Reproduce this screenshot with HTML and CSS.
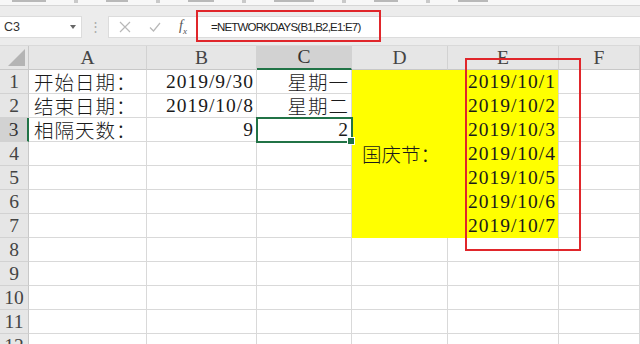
FILE: index.html
```html
<!DOCTYPE html>
<html lang="zh-CN">
<head>
    <meta charset="UTF-8">
    <title>NETWORKDAYS</title>
    <link rel="stylesheet" href="styles.css">
</head>
<body>
<div class="ribbon">
    <i style="width:34px"></i><i class="sep"></i><i style="width:22px"></i><i class="sep"></i><i style="width:26px"></i><i class="sep"></i><i style="width:40px"></i><i class="sep"></i><i style="width:24px"></i><i class="sep"></i><i style="width:30px"></i>
</div>

<div class="fbar">
    <div class="namebox">
        <span>C3</span>
        <i class="drop"></i>
    </div>
    <div class="grip">⋮</div>
    <div class="input">
        <svg class="ico" width="12" height="12" viewBox="0 0 12 12">
            <path d="M1 1L11 11M11 1L1 11" stroke="#b8b8b8" stroke-width="1.2" fill="none"/>
        </svg>
        <svg class="ico" width="12" height="12" viewBox="0 0 12 12">
            <path d="M1 6.5L4.5 10L11 2" stroke="#b8b8b8" stroke-width="1.2" fill="none"/>
        </svg>
        <span class="fx">f<sub>x</sub></span>
        <span class="formula">=NETWORKDAYS(B1,B2,E1:E7)</span>
    </div>
    <div class="mark mark-formula"></div>
</div>

<div class="sheet">
    <div class="grid">
        <div class="corner"><i></i></div>
        <div class="ch">A</div>
        <div class="ch">B</div>
        <div class="ch on">C</div>
        <div class="ch">D</div>
        <div class="ch">E</div>
        <div class="ch">F</div>

        <div class="rh">1</div>
        <div class="cell">开始日期：</div>
        <div class="cell num">2019/9/30</div>
        <div class="cell num">星期一</div>
        <div class="cell merged">国庆节：</div>
        <div class="cell num yellow">2019/10/1</div>
        <div class="cell"></div>

        <div class="rh">2</div>
        <div class="cell">结束日期：</div>
        <div class="cell num">2019/10/8</div>
        <div class="cell num">星期二</div>
        <div class="cell num yellow">2019/10/2</div>
        <div class="cell"></div>

        <div class="rh on">3</div>
        <div class="cell">相隔天数：</div>
        <div class="cell num">9</div>
        <div class="cell num active">2</div>
        <div class="cell num yellow">2019/10/3</div>
        <div class="cell"></div>

        <div class="rh">4</div>
        <div class="cell"></div>
        <div class="cell"></div>
        <div class="cell"></div>
        <div class="cell num yellow">2019/10/4</div>
        <div class="cell"></div>

        <div class="rh">5</div>
        <div class="cell"></div>
        <div class="cell"></div>
        <div class="cell"></div>
        <div class="cell num yellow">2019/10/5</div>
        <div class="cell"></div>

        <div class="rh">6</div>
        <div class="cell"></div>
        <div class="cell"></div>
        <div class="cell"></div>
        <div class="cell num yellow">2019/10/6</div>
        <div class="cell"></div>

        <div class="rh">7</div>
        <div class="cell"></div>
        <div class="cell"></div>
        <div class="cell"></div>
        <div class="cell num yellow">2019/10/7</div>
        <div class="cell"></div>

        <div class="rh">8</div>
        <div class="cell"></div><div class="cell"></div><div class="cell"></div><div class="cell"></div><div class="cell"></div><div class="cell"></div>
        <div class="rh">9</div>
        <div class="cell"></div><div class="cell"></div><div class="cell"></div><div class="cell"></div><div class="cell"></div><div class="cell"></div>
        <div class="rh">10</div>
        <div class="cell"></div><div class="cell"></div><div class="cell"></div><div class="cell"></div><div class="cell"></div><div class="cell"></div>
        <div class="rh">11</div>
        <div class="cell"></div><div class="cell"></div><div class="cell"></div><div class="cell"></div><div class="cell"></div><div class="cell"></div>
        <div class="rh">12</div>
        <div class="cell"></div><div class="cell"></div><div class="cell"></div><div class="cell"></div><div class="cell"></div><div class="cell"></div>
    </div>
    <div class="mark mark-e"></div>
</div>
</body>
</html>
```

FILE: styles.css
```css
* {
    margin: 0;
    padding: 0;
    box-sizing: border-box;
}
html, body {
    width: 640px;
    height: 344px;
    overflow: hidden;
    background: #fff;
}
body {
    font-family: "Liberation Sans", "Noto Sans CJK SC", sans-serif;
}

/* 功能区的最下边一点 */
.ribbon {
    height: 6px;
    background: #f7f7f7;
    border-bottom: 1px solid #d6d6d6;
    display: flex;
    gap: 28px;
    padding-left: 12px;
}
.ribbon i {
    height: 2px;
    background: #b9b9b9;
}
.ribbon i.sep {
    width: 4px;
    height: 3px;
    background: #c9c9c9;
}

/* 编辑栏 */
.fbar {
    height: 40px;
    background: #ececec;
    display: flex;
    align-items: center;
    padding-top: 2px;
    position: relative;
    border-bottom: 1px solid #d9d9d9;
}
.namebox {
    width: 82px;
    height: 22px;
    background: #fff;
    border: 1px solid #dcdcdc;
    border-left: none;
    display: flex;
    align-items: center;
    justify-content: space-between;
    padding: 0 5px 0 4px;
    font-size: 12.5px;
    color: #333;
}
.drop {
    width: 0;
    height: 0;
    border-left: 3px solid transparent;
    border-right: 3px solid transparent;
    border-top: 4px solid #666;
}
.grip {
    width: 26px;
    text-align: center;
    color: #aaa;
    font-size: 13px;
}
.input {
    flex: 1;
    height: 22px;
    background: #fff;
    border: 1px solid #dcdcdc;
    border-right: none;
    display: flex;
    align-items: center;
    padding-left: 10px;
}
.ico {
    margin-right: 18px;
}
.fx {
    font-family: "Liberation Serif", serif;
    font-style: italic;
    font-size: 14px;
    color: #555;
    width: 28px;
}
.fx sub {
    font-size: 9px;
}
.formula {
    font-size: 11.5px;
    letter-spacing: -0.8px;
    color: #222;
    padding-left: 4px;
}

/* 红框标注 */
.mark {
    position: absolute;
    border: 2px solid #e0262b;
    pointer-events: none;
}
.mark-formula {
    left: 196px;
    top: 4px;
    width: 185px;
    height: 32px;
}
.mark-e {
    left: 465px;
    top: 12px;
    width: 116px;
    height: 193px;
}

/* 表格 */
.sheet {
    position: relative;
    height: 298px;
    overflow: hidden;
}
.grid {
    display: grid;
    grid-template-columns: 29px 118px 110px 95px 96px 111px 1fr;
    grid-auto-rows: 24px;
    font-family: "Liberation Serif", "Noto Sans CJK SC", serif;
    font-size: 19.5px;
    font-weight: 300;
    color: #1a1a1a;
}
.corner, .ch, .rh {
    background: #e6e6e6;
    color: #444;
    border-right: 1px solid #c8c8c8;
    border-bottom: 1px solid #c8c8c8;
    display: flex;
    align-items: center;
    justify-content: center;
}
.corner {
    position: relative;
}
.corner i {
    position: absolute;
    right: 3px;
    bottom: 3px;
    width: 0;
    height: 0;
    border-left: 17px solid transparent;
    border-bottom: 17px solid #b4b4b4;
}
.ch {
    border-right-color: #d2d2d2;
}
.rh {
    border-bottom-color: #d2d2d2;
}
.ch.on, .rh.on {
    background: #d2d2d2;
    color: #333;
}
.ch.on {
    border-bottom: 2px solid #217346;
}
.rh.on {
    border-right: 2px solid #217346;
}
.cell {
    border-right: 1px solid #d9d9d9;
    border-bottom: 1px solid #d9d9d9;
    display: flex;
    align-items: center;
    padding: 0 4px 0 5px;
    white-space: nowrap;
    letter-spacing: 1px;
}
.num {
    justify-content: flex-end;
    padding-right: 2px;
}
.yellow {
    background: #ffff00;
    border-color: #ffff00;
    border-right-color: #d9d9d9;
}
.merged {
    grid-row: span 7;
    background: #ffff00;
    border-color: #ffff00;
    padding-left: 10px;
    letter-spacing: 0;
}
.active {
    position: relative;
    z-index: 1;
    outline: 2px solid #217346;
    outline-offset: -1px;
}
.active::after {
    content: "";
    position: absolute;
    right: -4px;
    bottom: -4px;
    width: 6px;
    height: 6px;
    background: #217346;
    border: 1px solid #fff;
}
```
